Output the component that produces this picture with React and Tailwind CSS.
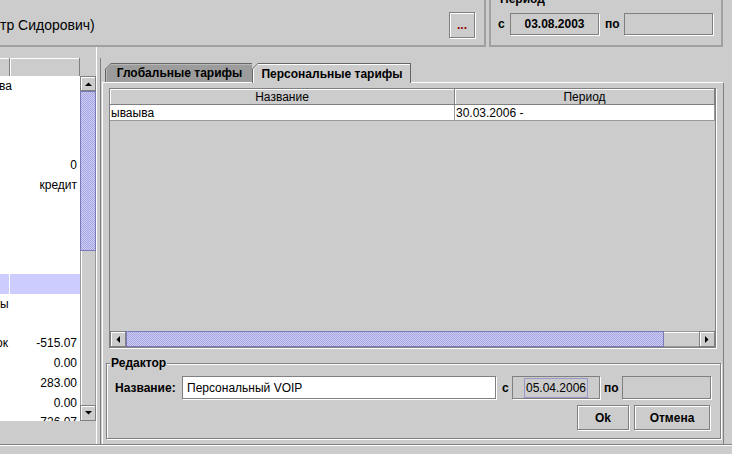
import React from 'react';

// Metal-style borders
const etched = 'border border-[#808080] shadow-[1px_1px_0_#fff]';
const raised = 'border border-[#808080] shadow-[inset_1px_1px_0_#fff,1px_1px_0_#fff]';
const bumps =
  'bg-[#ccccff] [background-image:repeating-conic-gradient(#a6a6d9_0_25%,#ccccff_0_50%)] [background-size:2px_2px]';

function Arrow({ dir }) {
  const pts = {
    up: '0,4 7,4 3.5,0.5',
    down: '0,0 7,0 3.5,3.5',
    left: '4,0 4,7 0.5,3.5',
    right: '0,0 0,7 3.5,3.5',
  };
  const vertical = dir === 'up' || dir === 'down';
  return (
    <svg width={vertical ? 7 : 4} height={vertical ? 4 : 7} viewBox={vertical ? '0 0 7 4' : '0 0 4 7'}>
      <polygon points={pts[dir]} fill="#000" />
    </svg>
  );
}

function ArrowButton({ dir, className = '' }) {
  return (
    <div
      className={`bg-[#cccccc] border border-[#808080] shadow-[inset_1px_1px_0_#fff] flex items-center justify-center shrink-0 ${className}`}
    >
      <Arrow dir={dir} />
    </div>
  );
}

const leftRows = [
  { l: 'ва', ml: '-ml-[1px]' },
  {},
  {},
  {},
  { r: '0' },
  { r: 'кредит' },
  {},
  {},
  {},
  {},
  { sel: true },
  { l: 'ы', ml: '-ml-[0px]' },
  {},
  { l: 'ок', ml: '-ml-[4px]', r: '-515.07' },
  { r: '0.00' },
  { r: '283.00' },
  { r: '0.00' },
  { r: '-726.07' },
];

function LeftTable() {
  return (
    <div className="w-[96px] h-[363px] flex flex-col">
      <div className="flex h-[18px] shrink-0">
        <div className="w-[10px] h-full bg-[#cccccc] border-r border-[#808080] shadow-[inset_0_1px_0_#fff]" />
        <div className="w-[70px] h-full bg-[#cccccc] border-r border-[#808080] shadow-[inset_1px_1px_0_#fff]" />
        <div className="w-[16px] h-full" />
      </div>
      <div className="flex h-[345px]">
        <div className="w-[80px] h-full bg-white overflow-hidden text-[12px] text-black">
          {leftRows.map((row, i) =>
            row.sel ? (
              <div key={i} className="flex h-[19.8px] bg-[#ccccff]">
                <div className="w-[9px]" />
                <div className="w-px bg-white" />
              </div>
            ) : (
              <div key={i} className="flex items-center h-[19.8px] leading-none whitespace-nowrap">
                {row.l && <span className={row.ml}>{row.l}</span>}
                {row.r && <span className="ml-auto pr-[3px]">{row.r}</span>}
              </div>
            )
          )}
        </div>
        <div className="w-[16px] h-full flex flex-col">
          <ArrowButton dir="up" className="h-[15px] w-[16px]" />
          <div className={`h-[160px] w-[16px] border border-[#7a7ab8] ${bumps}`} />
          <div className="h-[154px] w-[16px] bg-[#cccccc] border-x border-[#999999] shadow-[inset_1px_0_0_#fff]" />
          <ArrowButton dir="down" className="h-[16px] w-[16px]" />
        </div>
      </div>
    </div>
  );
}

function Tab({ selected, width, children }) {
  return (
    <div
      className={`bg-[#666666] pt-px pl-px ${selected ? 'pr-px h-[20px] relative z-10' : 'h-[19px]'} [clip-path:polygon(6px_0,100%_0,100%_100%,0_100%,0_6px)]`}
      style={{ width }}
    >
      <div
        className={`${selected ? 'bg-white' : 'bg-[#b8b8b8]'} h-full pt-px pl-px [clip-path:polygon(5px_0,100%_0,100%_100%,0_100%,0_5px)]`}
      >
        <div
          className={`${selected ? 'bg-[#cccccc]' : 'bg-[#9c9c9c]'} h-full flex items-center justify-center pb-px text-[12px] font-bold text-black [clip-path:polygon(4px_0,100%_0,100%_100%,0_100%,0_4px)]`}
        >
          {children}
        </div>
      </div>
    </div>
  );
}

function TariffTable() {
  return (
    <div className={`ml-[3px] w-[607px] h-[260px] flex flex-col ${etched}`}>
      <div className="flex h-[16px] shrink-0 text-[12px] text-black">
        <div className="w-[345px] h-full bg-[#cccccc] border-r border-b border-[#808080] shadow-[inset_1px_1px_0_#fff] flex items-center justify-center leading-none">
          Название
        </div>
        <div className="w-[260px] h-full bg-[#cccccc] border-r border-b border-[#808080] shadow-[inset_1px_1px_0_#fff] flex items-center justify-center leading-none">
          Период
        </div>
      </div>
      <div className="flex h-[16px] shrink-0 bg-white text-[12px] text-black">
        <div className="w-[345px] h-full border-r border-b border-[#999999] flex items-center pl-px leading-none">
          ываыва
        </div>
        <div className="w-[260px] h-full border-r border-b border-[#999999] flex items-center pl-px leading-none">
          30.03.2006 -
        </div>
      </div>
      <div className="flex-1" />
      <div className="flex h-[16px] shrink-0">
        <ArrowButton dir="left" className="w-[16px] h-[16px]" />
        <div className={`w-[538px] h-[16px] border border-[#7a7ab8] ${bumps}`} />
        <div className="w-[35px] h-[16px] bg-[#cccccc] border-y border-[#999999] shadow-[inset_0_1px_0_#fff]" />
        <ArrowButton dir="right" className="w-[16px] h-[16px]" />
      </div>
    </div>
  );
}

function Editor() {
  return (
    <div className={`relative mt-[15px] w-[615px] h-[76px] ${raised}`}>
      <span className="absolute -top-[8px] left-[3px] px-px bg-[#cccccc] text-[12px] font-bold leading-[14px]">
        Редактор
      </span>
      <div className="pl-[8px] pt-[12px] w-[604px]">
        <div className="flex items-center h-[23px] text-[12px] text-black">
          <span className="w-[67px] font-bold">Название:</span>
          <div className={`w-[314px] h-[23px] bg-white flex items-center pl-[4px] ${etched}`}>Персональный VOIP</div>
          <span className="w-[16px] pl-[6px] font-bold">с</span>
          <div className={`w-[88px] h-[23px] bg-[#cccccc] flex items-center justify-center ${etched}`}>
            <div className="w-[64px] h-[20px] border border-[#9999cc] flex items-center justify-center leading-none">
              05.04.2006
            </div>
          </div>
          <span className="w-[22px] pl-[4px] font-bold">по</span>
          <div className={`w-[89px] h-[23px] bg-[#cccccc] ${etched}`} />
        </div>
        <div className="flex justify-end gap-[5px] mt-[6px] pr-px text-[12px] font-bold text-black">
          <button type="button" className={`w-[52px] h-[25px] bg-[#cccccc] ${raised}`}>
            Ok
          </button>
          <button type="button" className={`w-[76px] h-[25px] bg-[#cccccc] ${raised}`}>
            Отмена
          </button>
        </div>
      </div>
    </div>
  );
}

export default function App() {
  return (
    <div className="w-[732px] h-[454px] bg-[#cccccc] overflow-hidden flex flex-col font-['Liberation_Sans',Arial,sans-serif] text-black select-none">
      {/* top panels */}
      <div className="flex h-[47px] shrink-0">
        <div className="w-[486px] h-full border-r-2 border-b-2 border-[#a0a0a0] flex items-start justify-between">
          <span className="mt-[17px] text-[14px] leading-[16px] whitespace-nowrap">тр Сидорович)</span>
          <div className={`mt-[12px] mr-[9px] w-[26px] h-[26px] bg-[#cccccc] flex items-end justify-center pb-[6px] ${raised}`}>
            <span className="text-[#990000] text-[12px] font-bold leading-none">...</span>
          </div>
        </div>
        <div className="relative ml-[3px] w-[234px] h-full border-x-2 border-b-2 border-[#a0a0a0]">
          <span className="absolute -top-[8px] left-[8px] px-px text-[12px] font-bold leading-[14px]">Период</span>
          <div className="flex items-center mt-[13px] pl-[7px] text-[12px] font-bold">
            <span className="w-[12px]">с</span>
            <div className={`w-[89px] h-[22px] flex items-center justify-center ${etched}`}>03.08.2003</div>
            <span className="ml-[6px] w-[19px]">по</span>
            <div className={`w-[89px] h-[22px] ${etched}`} />
          </div>
        </div>
      </div>

      {/* main split */}
      <div className="flex h-[397px] shrink-0">
        <div className="w-[97px] h-full border-r border-white pt-[11px]">
          <LeftTable />
        </div>
        <div className="w-[3px]" />
        <div className="flex-1 mt-[11px] border-l border-[#808080] pt-[5px] flex flex-col">
          <div className="flex pl-[4px] h-[19px] shrink-0">
            <Tab width={147}>Глобальные тарифы</Tab>
            <Tab width={159} selected>
              Персональные тарифы
            </Tab>
          </div>
          <div className="ml-px w-[622px] flex-1 border-t border-l border-white border-r border-r-[#808080] pl-[3px] pt-[5px]">
            <TariffTable />
            <Editor />
          </div>
        </div>
      </div>
      <div className="h-px bg-[#808080] shrink-0" />
      <div className="h-px bg-white shrink-0" />
    </div>
  );
}
